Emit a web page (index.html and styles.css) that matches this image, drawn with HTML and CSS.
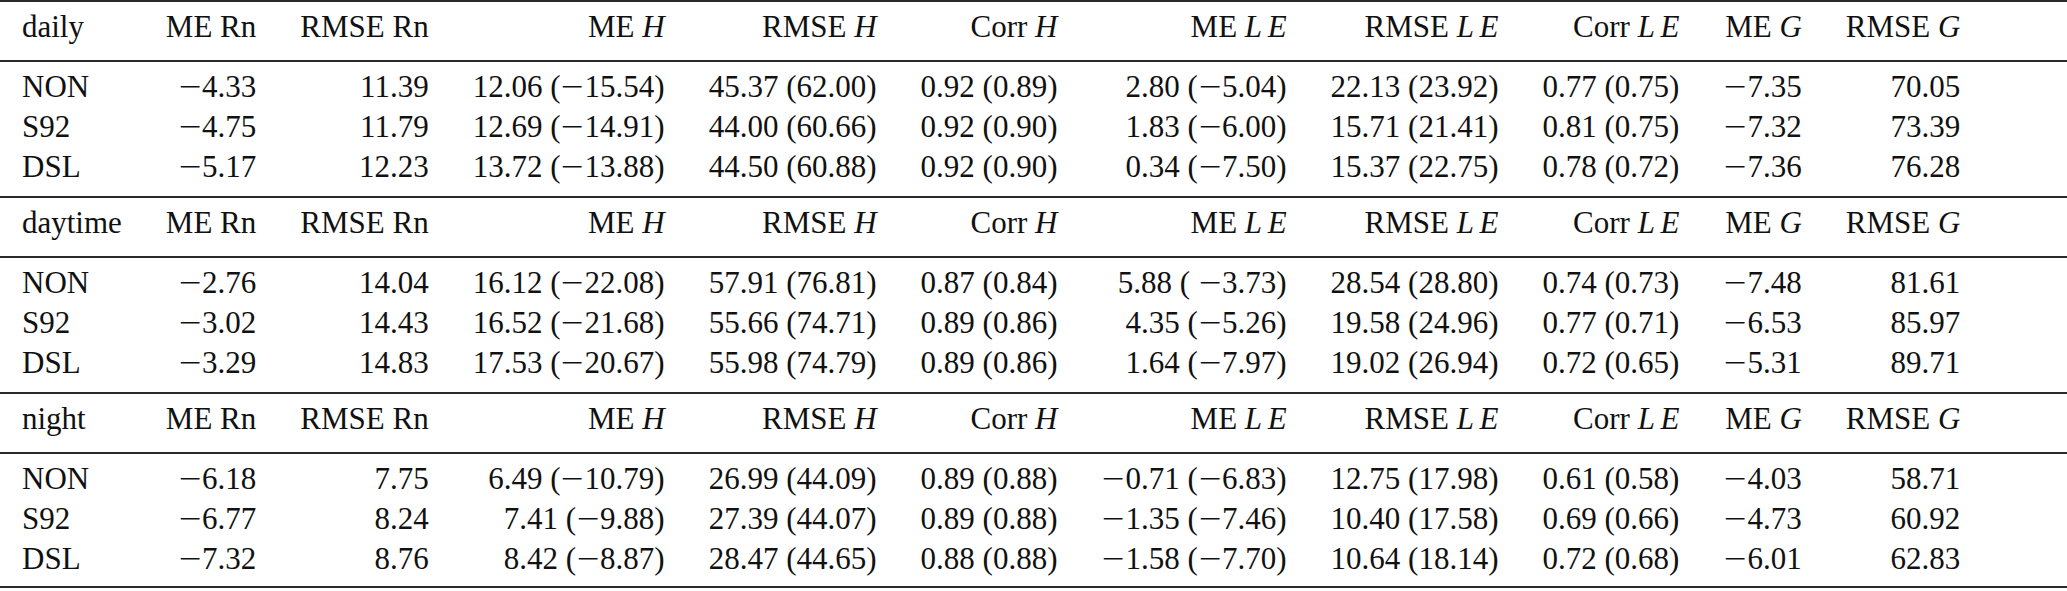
FILE: index.html
```html
<!DOCTYPE html>
<html>
<head>
<meta charset="utf-8">
<link rel="stylesheet" href="styles.css">
</head>
<body>
<table class="stats">
  <tbody class="sec">
    <tr class="hd">
      <td class="stub">daily</td><td>ME Rn</td><td>RMSE Rn</td><td>ME <i>H</i></td><td>RMSE <i>H</i></td><td>Corr <i>H</i></td><td>ME <i class="le">L</i><i>E</i></td><td>RMSE <i class="le">L</i><i>E</i></td><td>Corr <i class="le">L</i><i>E</i></td><td>ME <i>G</i></td><td>RMSE <i>G</i></td><td class="fill"></td>
    </tr>
    <tr class="r1"><td class="stub">NON</td><td><span class="mn">−</span>4.33</td><td>11.39</td><td>12.06 (<span class="mn">−</span>15.54)</td><td>45.37 (62.00)</td><td>0.92 (0.89)</td><td>2.80 (<span class="mn">−</span>5.04)</td><td>22.13 (23.92)</td><td>0.77 (0.75)</td><td><span class="mn">−</span>7.35</td><td>70.05</td><td class="fill"></td></tr>
    <tr><td class="stub">S92</td><td><span class="mn">−</span>4.75</td><td>11.79</td><td>12.69 (<span class="mn">−</span>14.91)</td><td>44.00 (60.66)</td><td>0.92 (0.90)</td><td>1.83 (<span class="mn">−</span>6.00)</td><td>15.71 (21.41)</td><td>0.81 (0.75)</td><td><span class="mn">−</span>7.32</td><td>73.39</td><td class="fill"></td></tr>
    <tr class="r3"><td class="stub">DSL</td><td><span class="mn">−</span>5.17</td><td>12.23</td><td>13.72 (<span class="mn">−</span>13.88)</td><td>44.50 (60.88)</td><td>0.92 (0.90)</td><td>0.34 (<span class="mn">−</span>7.50)</td><td>15.37 (22.75)</td><td>0.78 (0.72)</td><td><span class="mn">−</span>7.36</td><td>76.28</td><td class="fill"></td></tr>
  </tbody>
  <tbody class="sec">
    <tr class="hd">
      <td class="stub">daytime</td><td>ME Rn</td><td>RMSE Rn</td><td>ME <i>H</i></td><td>RMSE <i>H</i></td><td>Corr <i>H</i></td><td>ME <i class="le">L</i><i>E</i></td><td>RMSE <i class="le">L</i><i>E</i></td><td>Corr <i class="le">L</i><i>E</i></td><td>ME <i>G</i></td><td>RMSE <i>G</i></td><td class="fill"></td>
    </tr>
    <tr class="r1"><td class="stub">NON</td><td><span class="mn">−</span>2.76</td><td>14.04</td><td>16.12 (<span class="mn">−</span>22.08)</td><td>57.91 (76.81)</td><td>0.87 (0.84)</td><td>5.88 ( <span class="mn">−</span>3.73)</td><td>28.54 (28.80)</td><td>0.74 (0.73)</td><td><span class="mn">−</span>7.48</td><td>81.61</td><td class="fill"></td></tr>
    <tr><td class="stub">S92</td><td><span class="mn">−</span>3.02</td><td>14.43</td><td>16.52 (<span class="mn">−</span>21.68)</td><td>55.66 (74.71)</td><td>0.89 (0.86)</td><td>4.35 (<span class="mn">−</span>5.26)</td><td>19.58 (24.96)</td><td>0.77 (0.71)</td><td><span class="mn">−</span>6.53</td><td>85.97</td><td class="fill"></td></tr>
    <tr class="r3"><td class="stub">DSL</td><td><span class="mn">−</span>3.29</td><td>14.83</td><td>17.53 (<span class="mn">−</span>20.67)</td><td>55.98 (74.79)</td><td>0.89 (0.86)</td><td>1.64 (<span class="mn">−</span>7.97)</td><td>19.02 (26.94)</td><td>0.72 (0.65)</td><td><span class="mn">−</span>5.31</td><td>89.71</td><td class="fill"></td></tr>
  </tbody>
  <tbody class="sec last">
    <tr class="hd">
      <td class="stub">night</td><td>ME Rn</td><td>RMSE Rn</td><td>ME <i>H</i></td><td>RMSE <i>H</i></td><td>Corr <i>H</i></td><td>ME <i class="le">L</i><i>E</i></td><td>RMSE <i class="le">L</i><i>E</i></td><td>Corr <i class="le">L</i><i>E</i></td><td>ME <i>G</i></td><td>RMSE <i>G</i></td><td class="fill"></td>
    </tr>
    <tr class="r1"><td class="stub">NON</td><td><span class="mn">−</span>6.18</td><td>7.75</td><td>6.49 (<span class="mn">−</span>10.79)</td><td>26.99 (44.09)</td><td>0.89 (0.88)</td><td><span class="mn">−</span>0.71 (<span class="mn">−</span>6.83)</td><td>12.75 (17.98)</td><td>0.61 (0.58)</td><td><span class="mn">−</span>4.03</td><td>58.71</td><td class="fill"></td></tr>
    <tr><td class="stub">S92</td><td><span class="mn">−</span>6.77</td><td>8.24</td><td>7.41 (<span class="mn">−</span>9.88)</td><td>27.39 (44.07)</td><td>0.89 (0.88)</td><td><span class="mn">−</span>1.35 (<span class="mn">−</span>7.46)</td><td>10.40 (17.58)</td><td>0.69 (0.66)</td><td><span class="mn">−</span>4.73</td><td>60.92</td><td class="fill"></td></tr>
    <tr class="r3"><td class="stub">DSL</td><td><span class="mn">−</span>7.32</td><td>8.76</td><td>8.42 (<span class="mn">−</span>8.87)</td><td>28.47 (44.65)</td><td>0.88 (0.88)</td><td><span class="mn">−</span>1.58 (<span class="mn">−</span>7.70)</td><td>10.64 (18.14)</td><td>0.72 (0.68)</td><td><span class="mn">−</span>6.01</td><td>62.83</td><td class="fill"></td></tr>
  </tbody>
</table>
</body>
</html>
```
FILE: styles.css
```css
html, body {
  margin: 0;
  padding: 0;
  background: #ffffff;
}

.stats {
  width: 100%;
  border-collapse: separate;
  border-spacing: 0;
  font-family: "Liberation Serif", "Times New Roman", serif;
  font-size: 31px;
  color: #111111;
}

.stats td {
  padding: 0 22px;
  line-height: 40px;
  text-align: right;
  white-space: nowrap;
  vertical-align: baseline;
}

.stats td.stub {
  text-align: left;
}

.stats td.fill {
  width: 100%;
  padding: 0;
}

.stats i {
  font-style: italic;
}

.stats i.le {
  margin-right: 0.18em;
}

.mn {
  display: inline-block;
  width: 0.778em;
  text-align: center;
  transform: scaleX(1.3);
}

.hd td {
  border-top: 2px solid #2a2a2a;
  border-bottom: 2px solid #2a2a2a;
  padding-top: 5px;
  padding-bottom: 13px;
}

.r1 td {
  padding-top: 5px;
}

.r3 td {
  padding-bottom: 9px;
}

.last .r3 td {
  padding-bottom: 7px;
  border-bottom: 2px solid #2a2a2a;
}
```
